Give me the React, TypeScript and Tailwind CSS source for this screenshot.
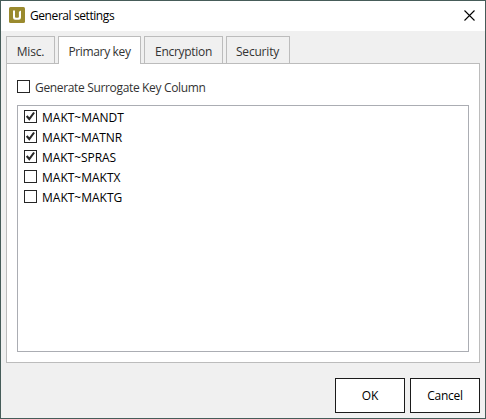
import React, { useState } from "react";

function CheckBox({ checked }: { checked: boolean }) {
  return (
    <span className="block h-[13px] w-[13px] shrink-0 border border-[#262626] bg-white">
      {checked && (
        <svg viewBox="0 0 11 11" className="block h-[11px] w-[11px]" fill="none">
          <path d="M1.7 5 L4.3 8 L9.1 1.5" stroke="#262626" strokeWidth="2.1" />
        </svg>
      )}
    </span>
  );
}

const tabs = [
  { label: "Misc.", box: "w-[49px]", text: "tracking-[-0.2px]" },
  { label: "Primary key", box: "w-[83px]", text: "tracking-[-0.35px]" },
  { label: "Encryption", box: "w-[79px]", text: "tracking-[-0.3px]" },
  { label: "Security", box: "w-[64px] pr-px", text: "tracking-[-0.2px]" },
];

const columns = [
  { name: "MAKT~MANDT", checked: true, text: "tracking-[0px]" },
  { name: "MAKT~MATNR", checked: true, text: "tracking-[-0.05px]" },
  { name: "MAKT~SPRAS", checked: true, text: "tracking-[-0.05px]" },
  { name: "MAKT~MAKTX", checked: false, text: "tracking-[0px]" },
  { name: "MAKT~MAKTG", checked: false, text: "tracking-[0px]" },
];

export default function App() {
  const [active, setActive] = useState("Primary key");
  const [surrogate, setSurrogate] = useState(false);
  const [keys, setKeys] = useState(columns);

  const toggle = (name: string) =>
    setKeys(keys.map((k) => (k.name === name ? { ...k, checked: !k.checked } : k)));

  return (
    <div className="flex h-[419px] w-[486px] flex-col border border-[#465c59] bg-[#f0f0f0] font-['Open_Sans','Noto_Sans',sans-serif] text-[12px] leading-4 whitespace-nowrap text-[#333]">
      <header className="flex h-[30px] shrink-0 items-center bg-white pr-[10px] pb-[2px] pl-2 text-black">
        <svg viewBox="0 0 16 16" className="h-4 w-4">
          <rect width="16" height="16" rx="1.5" fill="#9a8a2e" />
          <path d="M4 3.5H6V9.7Q6 10.8 7 10.8H8.8Q9.9 10.8 9.9 9.7V4.7L12 3.5V10.6Q12 12.8 9.8 12.8H6.2Q4 12.8 4 10.6Z" fill="#fff" />
        </svg>
        <h1 className="mt-[2px] ml-[5px] tracking-[-0.42px]">General settings</h1>
        <button aria-label="Close" className="mt-px ml-auto">
          <svg viewBox="0 0 11 11" className="block h-[11px] w-[11px]" fill="none">
            <path d="M.5 .5L10.5 10.5M10.5 .5L.5 10.5" stroke="#000" strokeWidth="1.1" />
          </svg>
        </button>
      </header>

      <nav className="mt-[5px] ml-[5px] flex h-7 shrink-0 gap-[3px]">
        {tabs.map((t) => (
          <button
            key={t.label}
            onClick={() => setActive(t.label)}
            className={`${t.box} ${t.text} border border-[#bcbcbc] ${
              active === t.label ? "z-10 border-b-0 bg-white pt-[2px]" : "bg-[#f0f0f0] pt-[3px]"
            }`}
          >
            {t.label}
          </button>
        ))}
      </nav>

      <main className="mx-[5px] -mt-px flex h-[300px] w-[474px] shrink-0 flex-col border border-[#bcbcbc] bg-white px-[10px] pt-4">
        <button onClick={() => setSurrogate(!surrogate)} className="flex h-[13px] items-start gap-[5px]">
          <CheckBox checked={surrogate} />
          <span className="pt-px leading-[13px] tracking-[-0.34px]">Generate Surrogate Key Column</span>
        </button>
        <ul className="mt-[12px] h-[247px] w-[452px] border border-[#abadb3] pt-[4px] pl-[6px] text-black">
          {keys.map((k) => (
            <li key={k.name} className="h-5">
              <button onClick={() => toggle(k.name)} className="flex h-[13px] items-start gap-[5px]">
                <CheckBox checked={k.checked} />
                <span className={`pt-px leading-[13px] ${k.text}`}>{k.name}</span>
              </button>
            </li>
          ))}
        </ul>
      </main>

      <footer className="mt-[15px] mr-[5px] flex justify-end gap-[5px] text-black">
        <button className="h-[35px] w-[70px] border border-[#1b1b1b] bg-white pt-px tracking-[-0.2px]">OK</button>
        <button className="h-[35px] w-[70px] border border-[#1b1b1b] bg-white pt-px tracking-[-0.3px]">Cancel</button>
      </footer>
    </div>
  );
}
